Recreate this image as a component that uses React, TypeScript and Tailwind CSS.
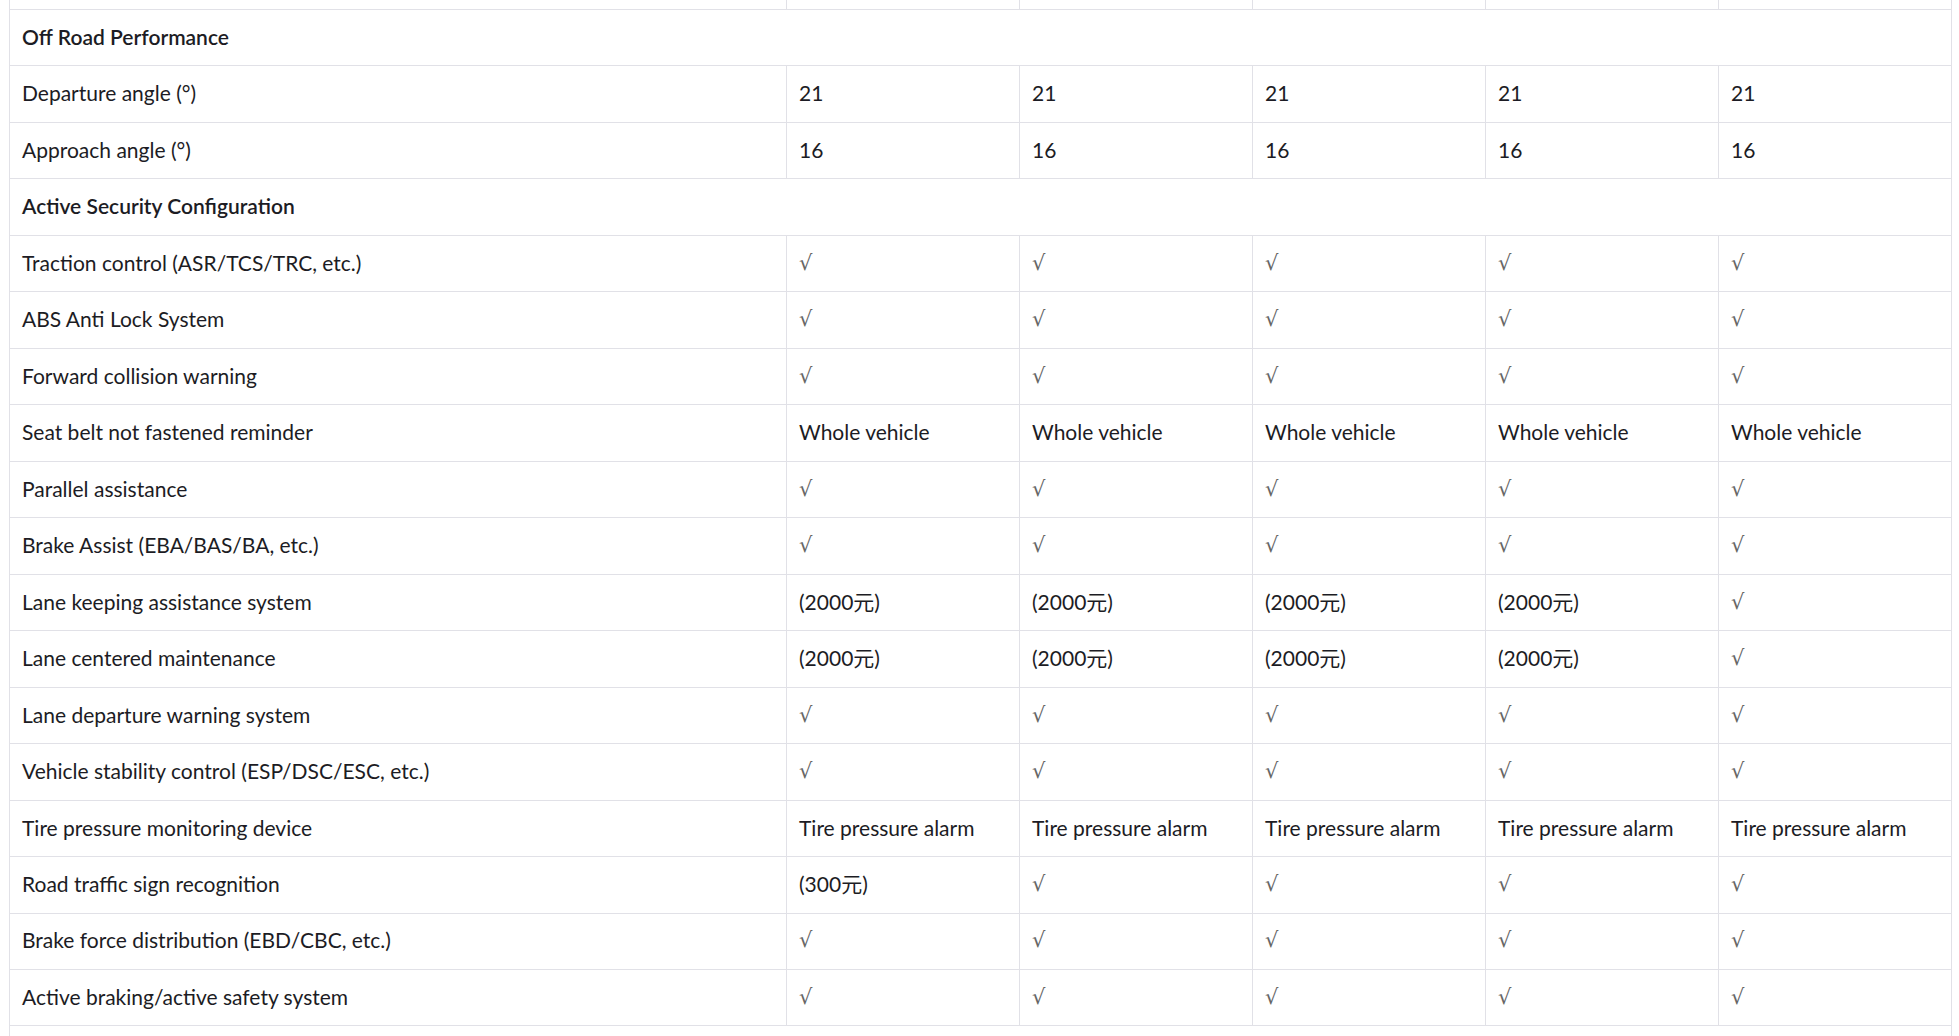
import React from "react";

type Row = { section: string } | { label: string; values: string[] };

const C = "√";
const all = (v: string) => [v, v, v, v, v];

const rows: Row[] = [
  { section: "Off Road Performance" },
  { label: "Departure angle (°)", values: all("21") },
  { label: "Approach angle (°)", values: all("16") },
  { section: "Active Security Configuration" },
  { label: "Traction control (ASR/TCS/TRC, etc.)", values: all(C) },
  { label: "ABS Anti Lock System", values: all(C) },
  { label: "Forward collision warning", values: all(C) },
  { label: "Seat belt not fastened reminder", values: all("Whole vehicle") },
  { label: "Parallel assistance", values: all(C) },
  { label: "Brake Assist (EBA/BAS/BA, etc.)", values: all(C) },
  { label: "Lane keeping assistance system", values: ["(2000元)", "(2000元)", "(2000元)", "(2000元)", C] },
  { label: "Lane centered maintenance", values: ["(2000元)", "(2000元)", "(2000元)", "(2000元)", C] },
  { label: "Lane departure warning system", values: all(C) },
  { label: "Vehicle stability control (ESP/DSC/ESC, etc.)", values: all(C) },
  { label: "Tire pressure monitoring device", values: all("Tire pressure alarm") },
  { label: "Road traffic sign recognition", values: ["(300元)", C, C, C, C] },
  { label: "Brake force distribution (EBD/CBC, etc.)", values: all(C) },
  { label: "Active braking/active safety system", values: all(C) },
  { section: "" },
];

function Cell({ v }: { v: string }) {
  if (v === C) {
    return (
      <span className="text-[#666] text-[21px]" style={{ fontFamily: '"DejaVu Serif", serif' }}>
        {v}
      </span>
    );
  }
  return <span>{v}</span>;
}

export default function App() {
  return (
    <div
      className="bg-white h-[1036px] overflow-hidden pl-[9px] pr-[7px] text-[#1c1c24] text-[21px]"
      style={{ fontFamily: 'Lato, "Noto Sans CJK SC", sans-serif' }}
    >
      <table className="w-full border-collapse table-fixed border-x border-[#e1e1e7]">
        <colgroup>
          <col className="w-[777px]" />
          <col />
          <col />
          <col />
          <col />
          <col />
        </colgroup>
        <tbody>
          <tr className="h-[9.5px]">
            <td className="border-r border-[#e1e1e7] p-0"></td>
            <td className="border-r border-[#e1e1e7] p-0"></td>
            <td className="border-r border-[#e1e1e7] p-0"></td>
            <td className="border-r border-[#e1e1e7] p-0"></td>
            <td className="border-r border-[#e1e1e7] p-0"></td>
            <td className="p-0"></td>
          </tr>
          {rows.map((r, i) =>
            "section" in r ? (
              <tr key={i} className="h-[56.47px] border-t border-[#e1e1e7]">
                <td colSpan={6} className="px-[12px] pt-0 pb-[2px] font-semibold">
                  {r.section}
                </td>
              </tr>
            ) : (
              <tr key={i} className="h-[56.47px] border-t border-[#e1e1e7]">
                <td className="px-[12px] pt-0 pb-[2px] border-r border-[#e1e1e7]">{r.label}</td>
                {r.values.map((v, j) => (
                  <td
                    key={j}
                    className={
                      j < 4
                        ? "px-[12px] pt-0 pb-[2px] border-r border-[#e1e1e7]"
                        : "px-[12px] pt-0 pb-[2px]"
                    }
                  >
                    <Cell v={v} />
                  </td>
                ))}
              </tr>
            )
          )}
        </tbody>
      </table>
    </div>
  );
}
